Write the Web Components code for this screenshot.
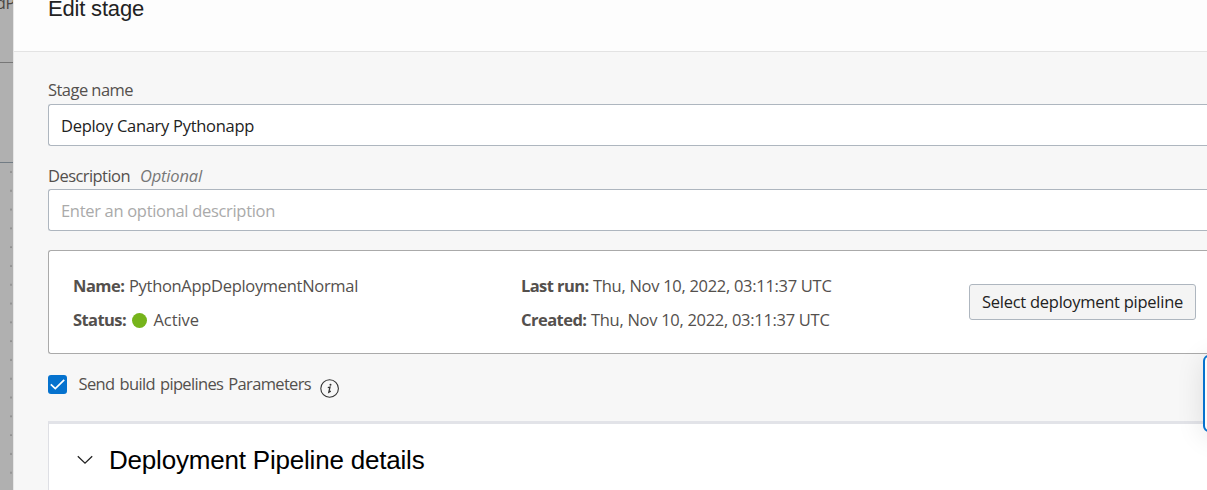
<!DOCTYPE html>
<html lang="en"><head><meta charset="utf-8"><title>Edit stage</title>
<style>
html,body{margin:0;height:100%;overflow:hidden}
body{font-family:"Open Sans","Noto Sans",sans-serif;font-size:16.5px;color:#54504d}
</style></head><body>
<stage-app></stage-app>
<script>
function define(name, html, ready){
  const t=document.createElement('template');t.innerHTML=html;
  customElements.define(name,class extends HTMLElement{
    connectedCallback(){
      if(this.shadowRoot)return;
      this.attachShadow({mode:'open'}).append(t.content.cloneNode(true));
      if(ready)ready.call(this,this.shadowRoot);
    }
  });
}
// A single line of text tracked to a given advance width.
define('fit-text','<style>:host{display:inline-block;white-space:nowrap;line-height:24px;flex:none}span{display:inline-block}</style><span><slot></slot></span>',function(root){
  const s=root.querySelector('span'),w=+this.getAttribute('w');
  const n=this.textContent.length;
  s.style.letterSpacing=((w-s.getBoundingClientRect().width)/n)+'px';
  this.style.width=w+'px';
});
define('canvas-strip',`<style>
:host{display:block;width:13px;height:490px;flex:none;background:#b0b0b0;overflow:hidden}
.top{box-sizing:border-box;height:63px;border-bottom:1px solid #777}
.mid{box-sizing:border-box;height:100px;border-bottom:1px solid #727c84}
.clip{display:flex;justify-content:flex-end;height:14px;color:#4b4743;font-size:16px}
fit-text{margin:-9px -2px 0 0}
.dots{height:327px;background:radial-gradient(circle at 11px 9px,#8e8e8e 0 .6px,transparent 1.2px) 0 0/13px 18.8px}
</style><div class="top"><div class="clip"><fit-text w="19">dP</fit-text></div></div><div class="mid"></div><div class="dots"></div>`);
define('panel-header',`<style>
:host{display:flex;align-items:flex-start;box-sizing:border-box;height:52px;padding:0 0 0 34px;background:#fdfdfd;border-bottom:1px solid #e3e3e3;font-family:"Liberation Sans",Arial,sans-serif;font-size:22px;color:#222}
::slotted(*){margin-top:-3px}
</style><slot></slot>`);
define('text-field',`<style>
:host{display:block}
.label{display:flex;gap:10px;height:26px}
:host([empty]) .label{padding-top:1px;height:25px}
.box{box-sizing:border-box;height:42px;border:1px solid #aeb6bf;border-right:0;border-radius:3px 0 0 3px;background:#fff;padding:9px 12px;display:flex;color:#222}
:host([empty]) .box{color:#aaa}
</style><div class="label"><slot name="label"></slot></div><div class="box"><slot></slot></div>`);
define('info-row',`<style>
:host{display:flex;height:34px;align-items:flex-start}
</style><slot></slot>`);
define('status-dot','<style>:host{display:block;width:15px;height:15px;border-radius:50%;background:#76b41b;margin:5px 7px 0 5.5px}</style>');
define('push-button',`<style>
:host{display:block;box-sizing:border-box;width:227px;height:36px;border:1px solid #aeb6bf;border-radius:3px;background:#f4f4f4;padding:5px 12px;color:#222}
</style><slot></slot>`);
define('pipeline-card',`<style>
:host{display:flex;box-sizing:border-box;height:104px;border:1px solid #aaa;border-right:0;border-radius:3px 0 0 3px;background:#fff;padding:23px 0 0 24px}
.a{width:448px}.b{width:448px}
push-button{margin-top:10px}
b{display:block}
</style>
<div class="a"><info-row><b><fit-text w="51.5">Name:</fit-text></b><fit-text w="229" style="margin-left:4.5px">PythonAppDeploymentNormal</fit-text></info-row>
<info-row><b><fit-text w="53">Status:</fit-text></b><status-dot></status-dot><fit-text w="45.5">Active</fit-text></info-row></div>
<div class="b"><info-row><b><fit-text w="67.5">Last run:</fit-text></b><fit-text w="238.5" style="margin-left:4.5px">Thu, Nov 10, 2022, 03:11:37 UTC</fit-text></info-row>
<info-row><b><fit-text w="65.5">Created:</fit-text></b><fit-text w="238.5" style="margin-left:4.5px">Thu, Nov 10, 2022, 03:11:37 UTC</fit-text></info-row></div>
<push-button><fit-text w="201">Select deployment pipeline</fit-text></push-button>`);
define('check-option',`<style>
:host{display:flex;height:26px;align-items:flex-start}
.c{flex:none;margin:3px 11.5px 0 0}.i{flex:none;margin:7px 0 0 9px}
</style>
<svg class="c" width="19" height="19" viewBox="0 0 19 19"><rect width="19" height="19" rx="3" fill="#0572ce"/><path d="M2.8 9.3l4.5 4.3L16.2 4.8" fill="none" stroke="#fff" stroke-width="1.7"/></svg>
<slot></slot>
<svg class="i" width="20" height="20" viewBox="0 0 20 20"><circle cx="9.6" cy="9.5" r="8.8" fill="none" stroke="#333" stroke-width="1.1"/><circle cx="10.5" cy="5.8" r="1" fill="#333"/><path d="M7.8 8.6l2.2-.5L8.8 13.2l2-1" fill="none" stroke="#333" stroke-width="1.3"/></svg>`);
define('detail-section',`<style>
:host{display:flex;box-sizing:border-box;height:69px;background:#fff;border-top:3px solid #e2e3e8;border-left:1px solid #dedfe4;padding:24px 0 0 28px;font-family:"Liberation Sans",Arial,sans-serif;font-size:26px;color:#000}
svg{flex:none;margin:7px 16px 0 0}
</style><svg width="16" height="10" viewBox="0 0 16 10"><path d="M.8 1.2L8 8.2l7.2-7" fill="none" stroke="#222" stroke-width="1.3"/></svg><slot></slot>`);
define('focus-popover','<style>:host{position:absolute;box-sizing:border-box;left:1203px;top:355px;width:40px;height:77px;border:2px solid #0572ce;border-radius:6px;background:#fdfdfd;box-shadow:0 4px 28px rgba(0,0,0,.11)}</style>');
define('stage-app',`<style>
:host{display:flex;position:relative;width:100%;height:490px;overflow:hidden}
main{flex:1;min-width:0;box-sizing:border-box;border-left:1px solid #e6e6e6;background:#f7f7f7}
.body{padding:26px 0 0 34px}
text-field+text-field{margin-top:17px}
pipeline-card{margin-top:19px}
check-option{margin-top:18px}
detail-section{margin-top:23px}
i{color:#777}
</style><canvas-strip></canvas-strip>
<main><panel-header><fit-text w="96">Edit stage</fit-text></panel-header><div class="body">
<text-field><fit-text slot="label" w="85">Stage name</fit-text><fit-text w="193">Deploy Canary Pythonapp</fit-text></text-field>
<text-field empty><fit-text slot="label" w="82">Description</fit-text><i slot="label"><fit-text w="62">Optional</fit-text></i><fit-text w="214">Enter an optional description</fit-text></text-field>
<pipeline-card></pipeline-card>
<check-option><fit-text w="232.5" style="word-spacing:1.5px">Send build pipelines Parameters</fit-text></check-option>
<detail-section><fit-text w="315.5">Deployment Pipeline details</fit-text></detail-section>
</div></main><focus-popover></focus-popover>`);
</script></body></html>
